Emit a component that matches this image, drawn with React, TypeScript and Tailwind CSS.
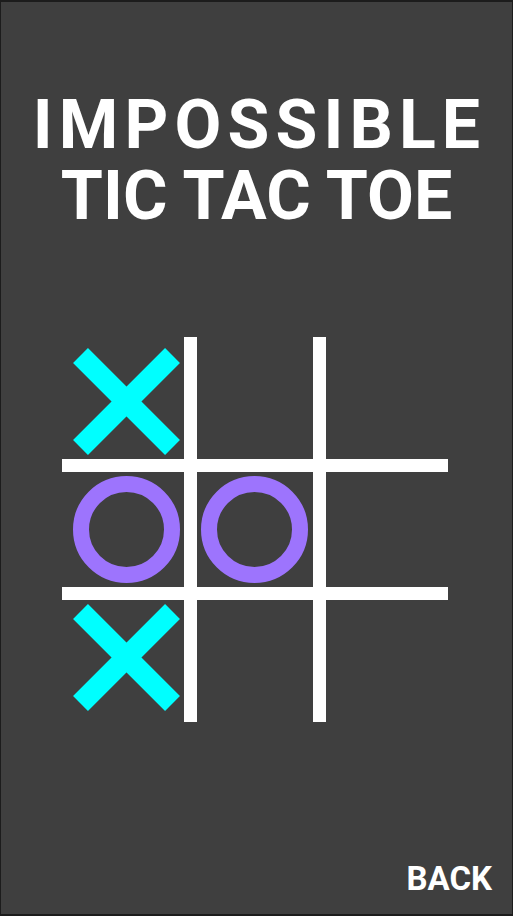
import React, { useState } from 'react'

type Mark = 'X' | 'O' | null

const Cross = () => (
  <svg width="107" height="107" viewBox="0 0 107 107">
    <line x1="7.5" y1="7.5" x2="99.5" y2="99.5" stroke="#00ffff" strokeWidth="21" />
    <line x1="99.5" y1="7.5" x2="7.5" y2="99.5" stroke="#00ffff" strokeWidth="21" />
  </svg>
)

const Nought = () => (
  <svg width="107" height="107" viewBox="0 0 107 107">
    <circle cx="53.5" cy="53.5" r="45.5" fill="none" stroke="#9d74fd" strokeWidth="16" />
  </svg>
)

const App = () => {
  const [board, setBoard] = useState<Mark[]>(['X', null, null, 'O', 'O', null, 'X', null, null])

  const handleClick = (i: number) => {
    if (board[i]) return
    const next = [...board]
    next[i] = 'X'
    setBoard(next)
  }

  return (
    <div className="h-screen w-full flex flex-col bg-[#3f3f3f] border-t-2 border-b-2 border-x border-[#1c1c1c] font-['Roboto',sans-serif] text-white">
      {/* title */}
      <div className="pt-[88px] text-center font-bold text-[68px] leading-[71px]">
        <h1 className="tracking-[0.09em] pl-[0.09em]">IMPOSSIBLE</h1>
        <h2>TIC TAC TOE</h2>
      </div>

      {/* board */}
      <div className="mt-[105px] pl-[61px]">
        <div className="relative w-[386px] h-[385px]">
          <svg className="absolute inset-0" width="386" height="385" viewBox="0 0 386 385">
            <rect x="122" y="0" width="13" height="385" fill="#fff" />
            <rect x="251" y="0" width="13" height="385" fill="#fff" />
            <rect x="0" y="122" width="386" height="13" fill="#fff" />
            <rect x="0" y="250" width="386" height="13" fill="#fff" />
          </svg>
          <div className="relative grid grid-cols-3 grid-rows-3 w-full h-full">
            {board.map((cell, i) => (
              <button
                key={i}
                onClick={() => handleClick(i)}
                className="flex items-center justify-center"
              >
                {cell === 'X' && <Cross />}
                {cell === 'O' && <Nought />}
              </button>
            ))}
          </div>
        </div>
      </div>

      {/* footer */}
      <div className="mt-auto flex justify-end pr-[20px] pb-[19px]">
        <button className="font-bold text-[33px] leading-none">BACK</button>
      </div>
    </div>
  )
}

export default App
